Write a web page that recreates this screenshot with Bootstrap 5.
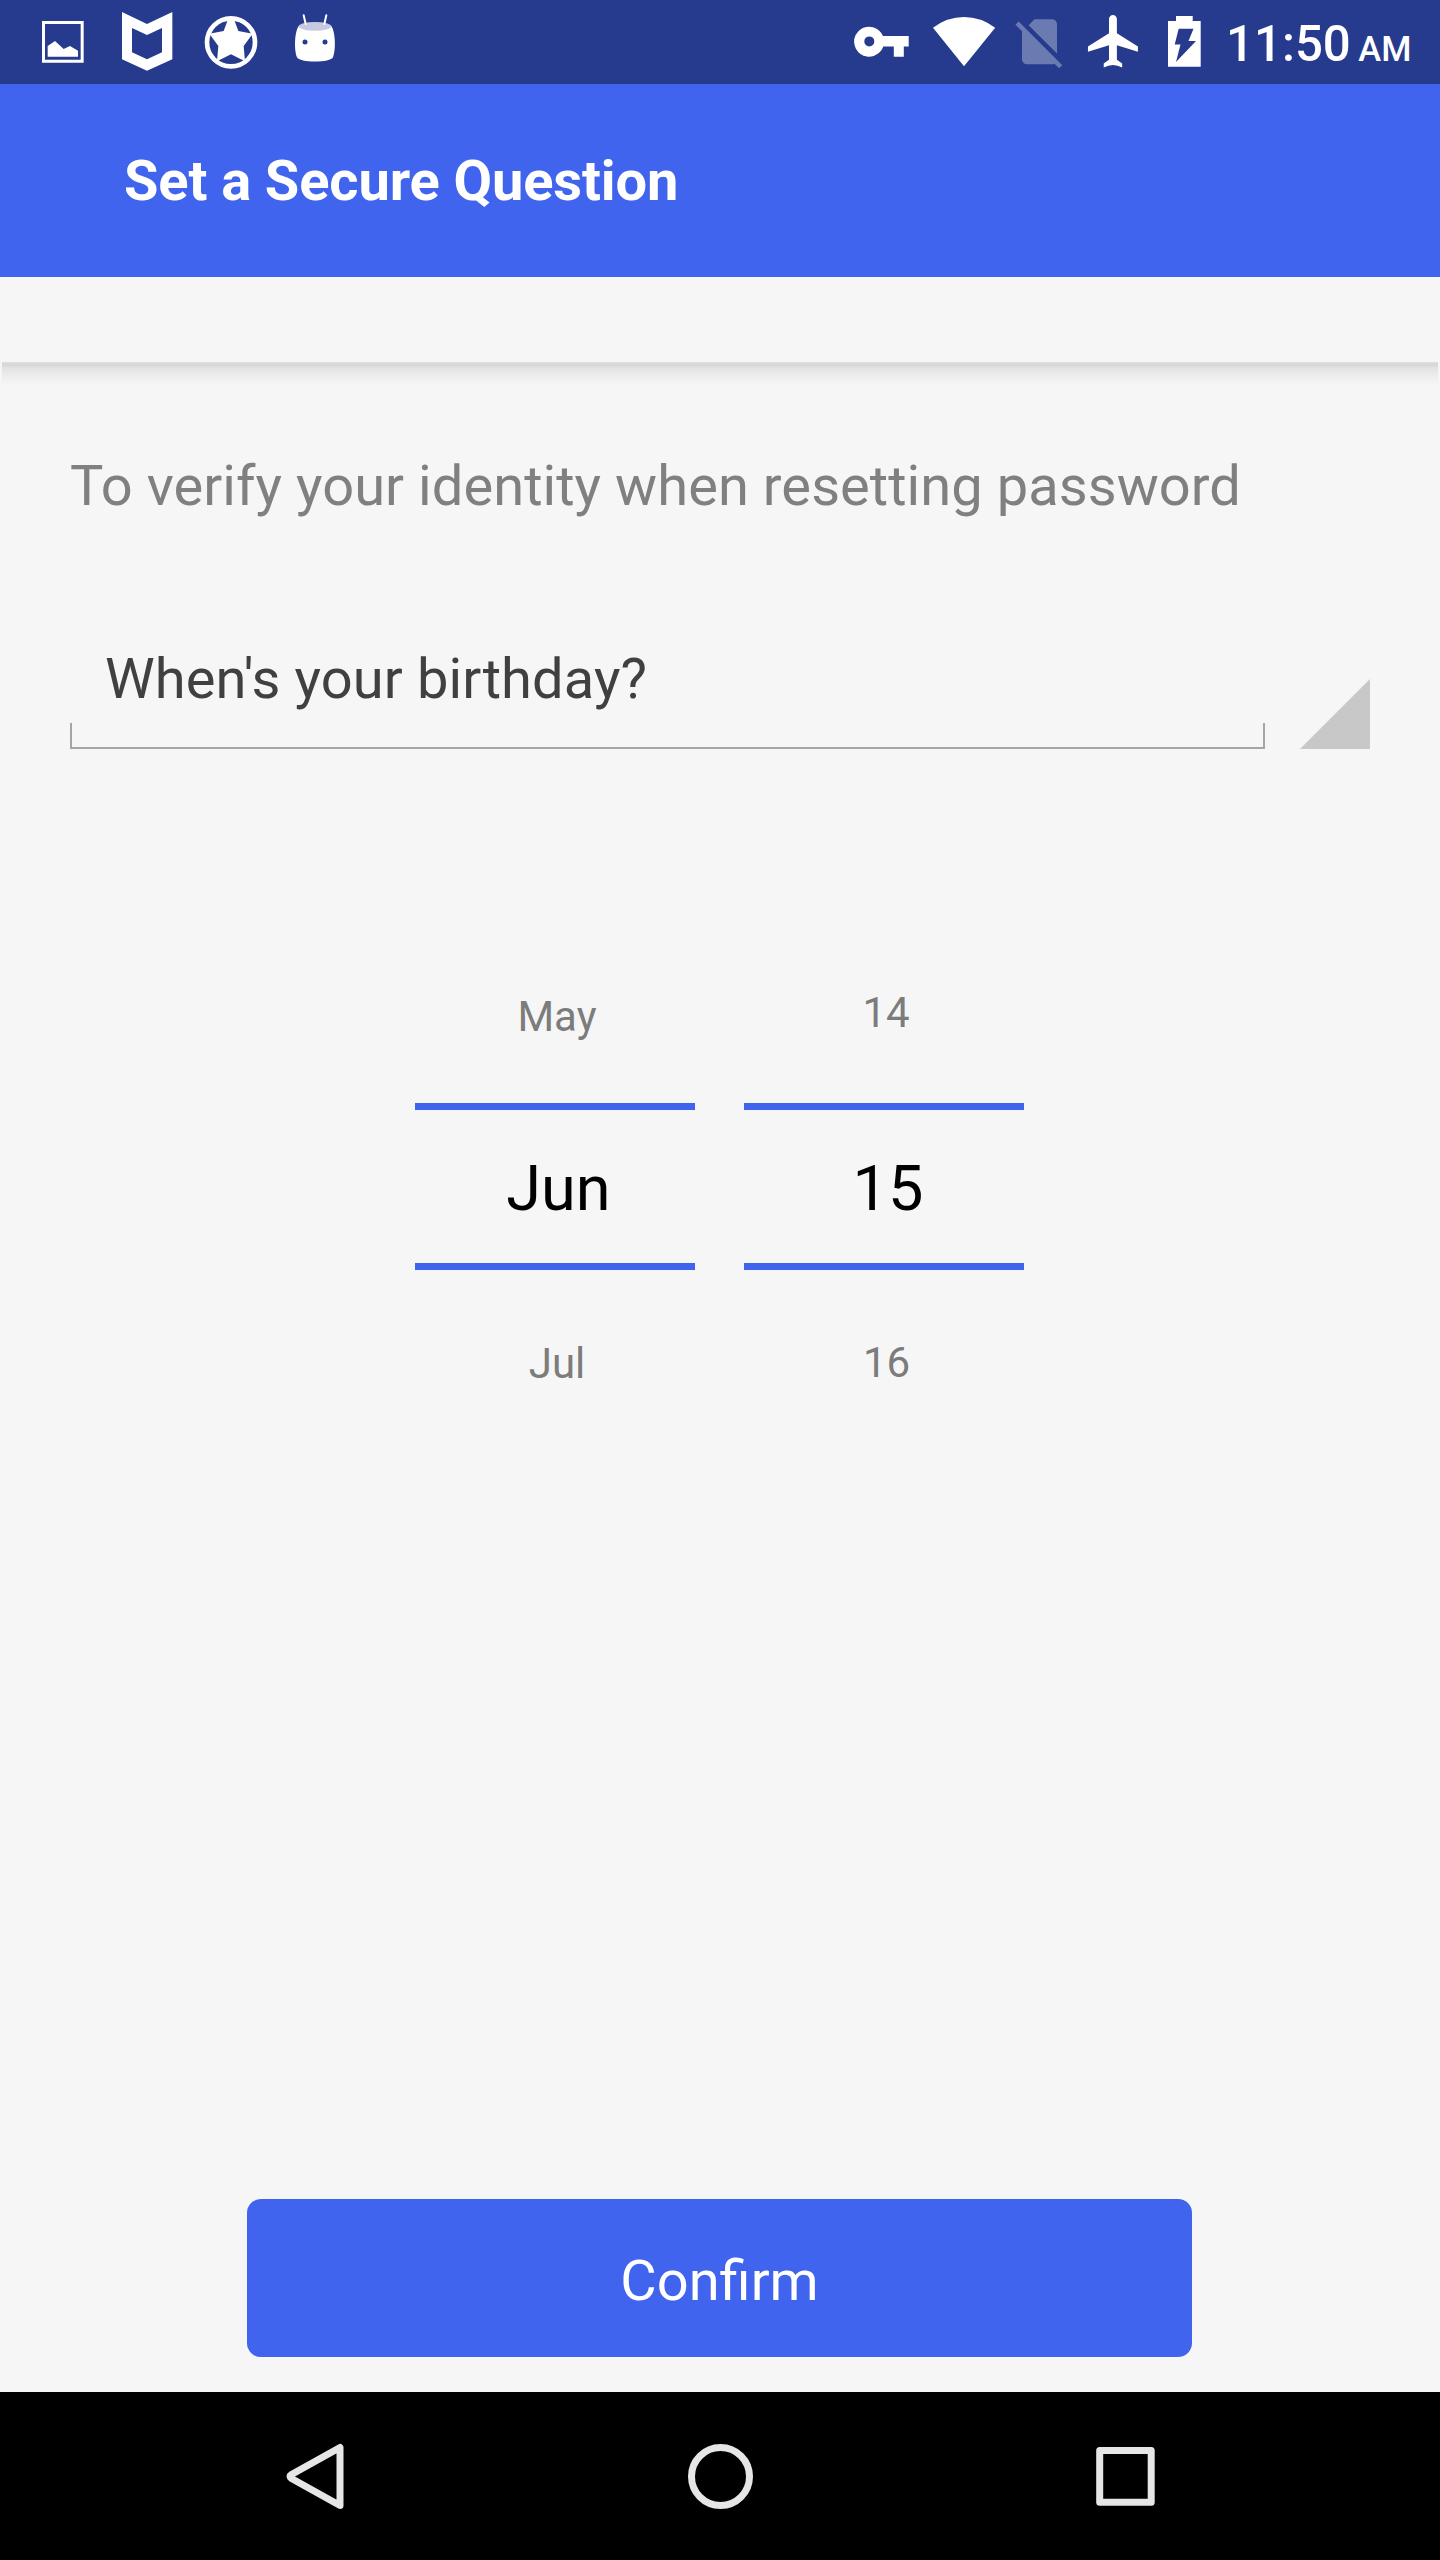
<!DOCTYPE html>
<html lang="en">
<head>
<meta charset="utf-8">
<meta name="viewport" content="width=device-width, initial-scale=1">
<title>Set a Secure Question</title>
<link href="https://cdn.jsdelivr.net/npm/bootstrap@5.3.0/dist/css/bootstrap.min.css" rel="stylesheet">
<style>
body{font-family:Roboto,"Liberation Sans",sans-serif;background:#f6f6f6;font-size:56px;line-height:66px;color:#404040}
.screen{width:1440px;height:2560px}
.statusbar{height:84px;background:#263b8d;padding-left:21px}
.statusbar svg{display:block;fill:#fff;flex:none}
.clock{width:214px;font-size:49.2px;font-weight:500;line-height:60px;padding-top:13.5px;gap:7.5px}
.meridiem{font-size:34.5px}
.appbar{height:193px;background:#4064ed;padding-left:124px}
.appbar h1{font-size:56px;line-height:66px;font-weight:700;color:#fff;letter-spacing:-.11px}
.strip{height:85px}
.strip-shadow{height:24px;margin:0 2px;background:linear-gradient(#e4e4e4 0,#d9d9d9 1px,#d9d9d9 4px,#e0e0e0 5px,#ececec 13px,#f4f4f4 21px,#f6f6f6)}
.content{padding:67px 70px 0}
.hint{color:#808080;letter-spacing:.06px}
.question{margin-top:127px}
.question-label{padding-left:35px;margin-bottom:11px;letter-spacing:.12px}
.rule-line{height:26px;border:solid #a5a5a5;border-width:0 2px 2px}
.corner{width:70px;height:70px;fill:#c8c8c8;margin-left:35px}
.pickers{margin-top:214px;gap:49px;padding-right:1px}
.picker{width:280px;text-align:center;font-size:42px;line-height:50px;color:#7c7c7c}
.picker-prev{height:140px;padding-top:29px}
.days .picker-prev{padding-top:25px}
.picker-value{height:167px;border:solid #4064ed;border-width:7px 0;color:#000;font-size:63px;line-height:158px;padding-left:8px}
.months .picker-value{padding-left:7px}
.picker-next{padding-top:69px}
.days .picker-next{padding-top:68px}
.days .picker-prev{padding-left:4px}
.days .picker-next{padding-left:5px}
.months .picker-prev,.months .picker-next{padding-left:4px}
.confirm{width:945px;height:158px;margin:0 0 35px 247px;background:#4064ed;border:0;border-radius:14px;color:#fff;font-size:56px;line-height:66px;padding:6px 0 0}
.navbuttons{height:168px;background:#000;flex:none}
.navbuttons svg{fill:none;stroke:#e6e6e6;stroke-width:7;stroke-linejoin:round}
</style>
<script src="https://cdn.jsdelivr.net/npm/bootstrap@5.3.0/dist/js/bootstrap.bundle.min.js"></script>
</head>
<body>
<div class="screen d-flex flex-column overflow-hidden">
  <header class="statusbar d-flex justify-content-between text-white">
    <div class="d-flex">
      <svg width="84" height="84" viewBox="63 0 252 252"><path fill-rule="evenodd" d="M126 63H251V188H126ZM135 72V179H242V72Z"/><path d="M143 138 165 123 191 147 210 138 234 152V170H143Z"/></svg>
      <svg width="84" height="84" viewBox="315 0 252 252"><path fill-rule="evenodd" d="M366 36 441 72 517 36V178L441 212 366 178ZM396 84V157L441 178 486 157V84L441 105Z"/></svg>
      <svg width="84" height="84" viewBox="567 0 252 252"><circle cx="693" cy="127" r="72" fill="none" stroke="#fff" stroke-width="14"/><path d="M684 58H702L715 93 758 101 731 138 735 184 693 163 651 184 655 138 628 101 671 93Z"/></svg>
      <svg width="84" height="84" viewBox="819 0 252 252"><path d="M898 76C883 92 882 150 891 172 897 189 993 189 999 172 1008 150 1007 92 992 76Z"/><ellipse cx="945" cy="79" rx="49" ry="13" fill="#c5cae1"/><path d="M911 46 917 72M979 46 973 72" stroke="#fff" stroke-width="6" stroke-linecap="round"/><g fill="#263b8d"><circle cx="915" cy="126" r="7.5"/><circle cx="975" cy="126" r="7.5"/></g></svg>
    </div>
    <div class="d-flex">
      <svg width="80" height="84" viewBox="842 0 80 84"><path fill-rule="evenodd" d="M883 36H908.7V46.5H903.8V56.7H893.8V46.5H883.3A15 15 0 1 1 883 36ZM869.3 36.4A5 5 0 1 0 869.3 46.4 5 5 0 1 0 869.3 36.4Z"/></svg>
      <svg width="84" height="84" viewBox="922 0 84 84"><path d="M933 27.8Q947 17 964 17T995.2 27.8L964 66.2Z"/></svg>
      <svg width="72" height="84" viewBox="1006 0 72 84"><path opacity=".32" transform="translate(1009.5 11.8) scale(2.5)" d="M18.99 5c0-1.100-.89-2-1.990-2h-7L7.660 5.340 19 16.680 18.990 5zM3.650 3.880L2.380 5.150 5 7.770V19c0 1.100.9 2 2 2h10.010c.35 0 .67-.1.960-.26l1.880 1.880 1.270-1.270L3.650 3.880z"/></svg>
      <svg width="76" height="84" viewBox="1078 0 76 84"><path transform="translate(1082.700 9.700) scale(2.630)" d="M21 16v-2l-8-5V3.500c0-.83-.67-1.500-1.500-1.500S10 2.670 10 3.500V9l-8 5v2l8-2.500V19l-2 1.500V22q3.500-2 7 0v-1.500L13 19v-5.500l8 2.500z"/></svg>
      <svg width="72" height="84" viewBox="1154 0 72 84"><path fill-rule="evenodd" d="M1176 16H1192.700V21H1200.700V66.700H1168V21H1176ZM1178.700 28.700 1174.700 44.500H1180.500L1176 62 1196 41H1188.500L1193.500 28.700Z"/></svg>
      <div class="clock d-flex align-items-baseline text-nowrap"><span>11:50</span><span class="meridiem">AM</span></div>
    </div>
  </header>
  <div class="appbar d-flex align-items-center"><h1 class="m-0">Set a Secure Question</h1></div>
  <div class="strip"></div>
  <div class="strip-shadow"></div>
  <main class="content flex-grow-1">
    <div class="hint">To verify your identity when resetting password</div>
    <div class="question d-flex align-items-end">
      <div class="flex-grow-1">
        <div class="question-label">When's your birthday?</div>
        <div class="rule-line"></div>
      </div>
      <svg class="corner" viewBox="0 0 70 70"><path d="M70 0V70H0Z"/></svg>
    </div>
    <div class="pickers d-flex justify-content-center">
      <div class="picker months">
        <div class="picker-prev">May</div>
        <div class="picker-value">Jun</div>
        <div class="picker-next">Jul</div>
      </div>
      <div class="picker days">
        <div class="picker-prev">14</div>
        <div class="picker-value">15</div>
        <div class="picker-next">16</div>
      </div>
    </div>
  </main>
  <button type="button" class="confirm btn flex-shrink-0">Confirm</button>
  <nav class="navbuttons d-flex">
    <svg width="520" height="168" viewBox="0 2392 520 168"><path d="M340 2447.500V2505.500L291.500 2478.500Q288.500 2476.500 291.500 2474.500Z"/></svg>
    <svg width="400" height="168" viewBox="520 2392 400 168"><circle cx="720.500" cy="2476.500" r="29"/></svg>
    <svg width="520" height="168" viewBox="920 2392 520 168"><path d="M1099.700 2450.500V2502.200H1151.200V2450.500Z"/></svg>
  </nav>
</div>
</body>
</html>
